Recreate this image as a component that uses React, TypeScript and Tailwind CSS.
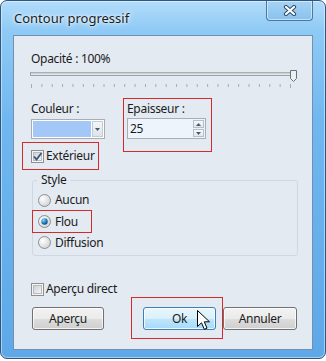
import React from "react"

const ticks = Array.from({ length: 26 }, (_, i) => 3 + i * 10.36)

function Slider() {
  return (
    <svg width="270" height="22" viewBox="0 0 270 22" className="block">
      <rect x="2.5" y="5.5" width="264" height="3" fill="#e2e5e7" stroke="#9ea3a8" />
      <line x1="3" y1="6" x2="266" y2="6" stroke="#b9bdc1" />
      {ticks.map((x, i) => (
        <line key={i} x1={x + 0.5} y1="17" x2={x + 0.5} y2={i === 0 || i === 25 ? 21 : 20} stroke="#a7acb1" />
      ))}
      <path d="M262.5 3.5 h6 v8 l-3 3 l-3 -3 z" fill="#eef1f4" stroke="#6e7378" />
    </svg>
  )
}

function Check({ checked }: { checked?: boolean }) {
  return (
    <svg width="13" height="13" viewBox="0 0 13 13" className="block shrink-0">
      <defs>
        <linearGradient id="cbg" x1="0" y1="0" x2="1" y2="1">
          <stop offset="0" stopColor="#cbcfd5" />
          <stop offset="1" stopColor="#f6f6f6" />
        </linearGradient>
      </defs>
      <rect x="0.5" y="0.5" width="12" height="12" fill="#f4f4f4" stroke="#8e8f8f" />
      <rect x="2.5" y="2.5" width="8" height="8" fill="url(#cbg)" stroke="#b8bcc2" />
      {checked && <path d="M3 6.5 L5.5 9.5 L10.5 3" fill="none" stroke="#40587e" strokeWidth="1.9" />}
    </svg>
  )
}

function Radio({ checked }: { checked?: boolean }) {
  return (
    <svg width="13" height="13" viewBox="0 0 13 13" className="block shrink-0">
      <defs>
        <radialGradient id="rg" cx="0.35" cy="0.35" r="0.8">
          <stop offset="0" stopColor="#ffffff" />
          <stop offset="1" stopColor="#c9ccd1" />
        </radialGradient>
        <radialGradient id="rdot" cx="0.35" cy="0.3" r="0.8">
          <stop offset="0" stopColor="#8fd5f7" />
          <stop offset="0.6" stopColor="#1c79b5" />
          <stop offset="1" stopColor="#0b3f6d" />
        </radialGradient>
      </defs>
      <circle cx="6.5" cy="6.5" r="6" fill="url(#rg)" stroke="#8e8f8f" />
      {checked && <circle cx="6.5" cy="6.5" r="3.2" fill="url(#rdot)" />}
    </svg>
  )
}

function Btn({ label, hot, w }: { label: string; hot?: boolean; w: string }) {
  return (
    <div
      className={`${w} h-[23px] rounded-[3px] border flex items-center justify-center text-[#1b1b1b] shadow-[inset_0_0_0_1px_rgba(255,255,255,0.75)] ${
        hot
          ? "border-[#3c7fb1] bg-[linear-gradient(to_bottom,#eaf6fd_0%,#d9f0fc_50%,#bee6fd_51%,#a7d9f5_100%)]"
          : "border-[#707070] bg-[linear-gradient(to_bottom,#f2f2f2_0%,#ebebeb_50%,#dddddd_51%,#cfcfcf_100%)]"
      }`}
    >
      {label}
    </div>
  )
}

export default function App() {
  return (
    <div className="w-[326px] h-[361px] bg-white font-['Segoe_UI','Noto_Sans',sans-serif] text-[12px] leading-[16px] text-[#1b1b1b]">
      <div className="w-[326px] h-[359px] rounded-[7px] border border-[#2d5680] bg-[linear-gradient(to_bottom,#b3dcfa_0px,#8ecaf5_30px,#70b7f0_120px,#5ea8e8_359px)] shadow-[inset_0_0_0_1px_rgba(255,255,255,0.45)] flex flex-col">
        <div className="h-[34px] flex items-start">
          <div className="pl-[13px] pt-[8px] text-[13px] leading-[18px] text-[#1c1c1c] [text-shadow:0_0_6px_#ffffff,0_0_3px_#ffffff]">Contour progressif</div>
          <div className="ml-auto mr-[12px] w-[47px] h-[20px] rounded-b-[4px] border border-t-0 border-[#4a78a3] bg-[linear-gradient(to_bottom,#a6d3f4,#88c2ee)] shadow-[inset_0_0_0_1px_rgba(255,255,255,0.5)] flex items-center justify-center">
            <svg width="14" height="11" viewBox="0 0 14 11">
              <path d="M3 2 L11 9 M11 2 L3 9" stroke="#2f4c6a" strokeWidth="4.2" strokeLinecap="round" />
              <path d="M3 2 L11 9 M11 2 L3 9" stroke="#ffffff" strokeWidth="2.2" strokeLinecap="round" />
            </svg>
          </div>
        </div>

        <div className="mx-[12px] h-[315px] border border-[#7390b2] bg-[#e4eaf2] flex flex-col tracking-[-0.3px]">
          <div className="ml-[17px] mt-[15px]">Opacité : 100%</div>
          <div className="ml-[14px] mt-0">
            <Slider />
          </div>

          <div className="flex items-start mt-[9px]">
            <div className="ml-[17px] w-[92px] flex flex-col pt-[3px]">
              <div>Couleur :</div>
              <div className="mt-[2px] w-[74px] h-[20px] border border-[#abadb3] bg-white flex items-center p-[1px]">
                <div className="w-[60px] h-full bg-[#a3c7f6]" />
                <div className="ml-[1px] w-[11px] h-[16px] border border-[#c5cbd3] bg-[linear-gradient(to_bottom,#f4f6f8,#dde3ea)] flex items-center justify-center">
                  <svg width="5" height="3" viewBox="0 0 5 3">
                    <path d="M0 0 H5 L2.5 3 Z" fill="#4b5a6c" />
                  </svg>
                </div>
              </div>
              <div className="-ml-[9px] mt-[3px] w-[77px] h-[28px] border border-[#d42a2a] flex items-center pl-[8px] gap-[2px]">
                <Check checked />
                <span>Extérieur</span>
              </div>
            </div>
            <div className="w-[89px] h-[54px] border border-[#d42a2a] pl-[3px] pt-[2px] flex flex-col">
              <div>Epaisseur :</div>
              <div className="mt-[1px] w-[79px] h-[21px] border border-[#abadb3] bg-[#eef4fb] flex items-center pl-[2px]">
                <span className="flex-1">25</span>
                <div className="mr-[1px] flex flex-col gap-[1px]">
                  {["M0 3 L2.5 0 L5 3 Z", "M0 0 H5 L2.5 3 Z"].map((d) => (
                    <div key={d} className="w-[11px] h-[8px] border border-[#b5bfca] bg-[linear-gradient(to_bottom,#f7f9fb,#e1e7ee)] flex items-center justify-center">
                      <svg width="5" height="3" viewBox="0 0 5 3">
                        <path d={d} fill="#4b5a6c" />
                      </svg>
                    </div>
                  ))}
                </div>
              </div>
            </div>
          </div>

          <fieldset className="ml-[18px] mt-[2px] w-[266px] border border-[#cfd8e2] rounded-[3px] pb-[3px] flex flex-col">
            <legend className="ml-[4px] px-[4px]">Style</legend>
            <div className="mt-[3px] h-[18px] flex items-center pl-[5px] gap-[4px]">
              <Radio />
              <span>Aucun</span>
            </div>
            <div className="-ml-[1px] mt-[1px] w-[60px] h-[23px] border border-[#d42a2a] flex items-center pl-[5px] gap-[4px]">
              <Radio checked />
              <span>Flou</span>
            </div>
            <div className="h-[19px] flex items-center pl-[5px] gap-[4px]">
              <Radio />
              <span>Diffusion</span>
            </div>
          </fieldset>

          <div className="ml-[17px] mt-[25px] h-[16px] flex items-center gap-[2px]">
            <Check />
            <span>Aperçu direct</span>
          </div>

          <div className="flex items-start">
            <div className="ml-[18px] mt-[10px]">
              <Btn label="Aperçu" w="w-[72px]" />
            </div>
            <div className="relative ml-[27px] w-[92px] h-[42px] border border-[#d42a2a] pl-[11px] pt-[9px]">
              <Btn label="Ok" hot w="w-[73px]" />
              <svg width="14" height="21" viewBox="0 0 14 21" className="absolute left-[65px] top-[12px]">
                <path d="M0.5 0.5 V16.5 L4.5 12.8 L7.3 19.3 L10 18.2 L7.3 11.8 H12.5 Z" fill="#ffffff" stroke="#000000" strokeLinejoin="round" />
              </svg>
            </div>
            <div className="mt-[10px]">
              <Btn label="Annuler" w="w-[74px]" />
            </div>
          </div>
        </div>
      </div>
    </div>
  )
}
